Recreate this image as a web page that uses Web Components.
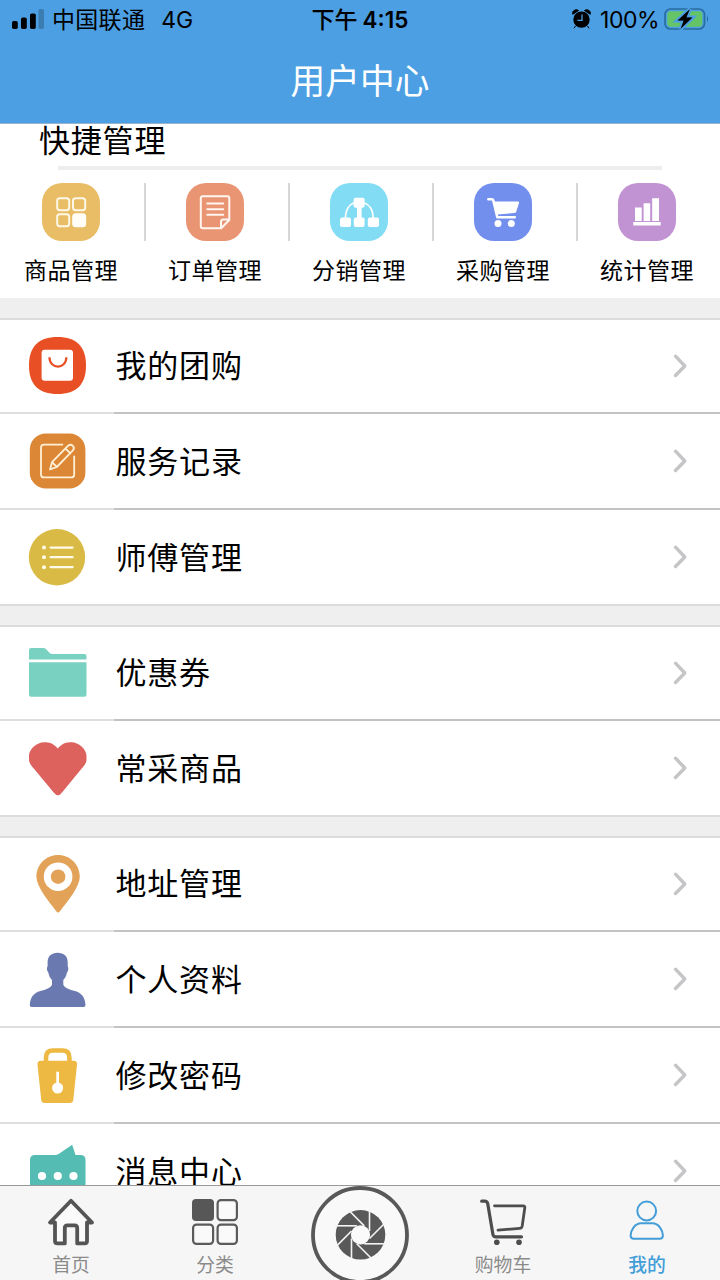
<!DOCTYPE html>
<html lang="zh-CN">
<head>
<meta charset="utf-8">
<title>用户中心</title>
<style>
  body {
    margin: 0;
    background: #efefef;
    font-family: Inter, "Noto Sans CJK SC", sans-serif;
    color: #000;
  }
</style>
</head>
<body>
<user-center></user-center>

<script>
  const icons = {
    goods: ['58 58', `<rect width="58" height="58" rx="20" fill="#e8bd65"/>
      <g fill="none" stroke="#fff8e6" stroke-width="2"><rect x="15.2" y="15.2" width="12" height="12" rx="2.6"/><rect x="31" y="15.2" width="12.2" height="12" rx="2.6"/><rect x="15.2" y="31.2" width="12" height="12" rx="2.6"/></g>
      <rect x="30.2" y="30.3" width="14" height="14" rx="3.6" fill="#fffdf6"/>`],
    order: ['58 58', `<rect width="58" height="58" rx="20" fill="#e99574"/>
      <g fill="none" stroke="#fff6ef" stroke-width="2" stroke-linejoin="round" stroke-linecap="round"><path d="M43.3 37V15.2q0-2-2-2H16.8q-2 0-2 2v28q0 2 2 2h18.4zM35 45v-6q0-2.4 2.4-2.4h5.8M21.2 20.6h16M21.2 26.2h16M21.2 31.8h16"/></g>`],
    share: ['58 58', `<rect width="58" height="58" rx="20" fill="#82dcf4"/>
      <g fill="#fff"><rect x="23.6" y="14.8" width="11" height="10" rx="2"/><rect x="10" y="34.4" width="11" height="9.6" rx="2"/><rect x="23.8" y="34.4" width="10.8" height="9.6" rx="2"/><rect x="37.8" y="34.4" width="11.2" height="9.6" rx="2"/><path d="M27 23h4.6v12H27z"/></g>
      <path d="M15.3 35Q16 23 24 19.8M34 19.8Q42.8 23 43.3 35" fill="none" stroke="#fff" stroke-width="1.7"/>`],
    buy: ['58 58', `<rect width="58" height="58" rx="20" fill="#728fee"/>
      <path d="M14.3 16.2h3.4q1.3 0 1.6 1.2l4 16.8H40.8" fill="none" stroke="#fff" stroke-width="2.5" stroke-linecap="round" stroke-linejoin="round"/>
      <path d="M20 18.6h24q1.4 0 1 1.5l-2.7 8.3q-.5 1.5-2 1.7L23 31.5z" fill="#fff"/><circle cx="24" cy="40.5" r="3.5" fill="#fff"/><circle cx="37.3" cy="40.5" r="3.5" fill="#fff"/>`],
    chart: ['58 58', `<rect width="58" height="58" rx="20" fill="#c193d3"/>
      <path d="M17 24.4h6.700v13.500H17zM25.600 20.300h6.600v17.600h-6.600zM34.200 15.300H41v22.600h-6.800zM15.300 39h27.400v3.400H15.300z" fill="#fff"/>`],
    bag: ['58 58', `<path d="M28.500 0C47.500 0 57 9.500 57 28.500S47.500 57 28.500 57 0 47.500 0 28.500 9.500 0 28.500 0z" fill="#e84f25"/>
      <rect x="12.600" y="12.800" width="31.400" height="31" rx="3" fill="#fff"/><path d="M20.400 20.300c.400 12.400 16.600 12.400 17 0" fill="none" stroke="#e84f25" stroke-width="2.200"/>`],
    edit: ['58 58', `<rect x=".8" y="1.500" width="55.600" height="55" rx="16" fill="#dc8736"/>
      <g fill="none" stroke="#fff0d5" stroke-width="1.800" stroke-linejoin="round" stroke-linecap="round"><path d="M33.400 12.600H15q-3 0-3 3v26.800q0 3 3 3h27.200q3 0 3-3V24.400"/><path d="M21 37.400l2-7.200 16.200-16.500q2.300-2 4.500 0 2.300 2.300.2 4.700L27.800 35zM36.400 16.500l5 4.800M23 30.200l4.800 4.800"/></g>`],
    list: ['58 58', `<circle cx="28" cy="29.200" r="28.200" fill="#d9ba45"/>
      <path d="M21.600 19.600h22M21.600 29.200h22M21.600 39.200h22" stroke="#fffbe8" stroke-width="2.200" stroke-linecap="round"/><g fill="#fffbe8"><circle cx="15" cy="19.600" r="2"/><circle cx="15" cy="29.200" r="2"/><circle cx="15" cy="39.200" r="2"/></g>`],
    folder: ['58 58', `<path d="M0 15.5V6q0-2 2-2h12q2 0 3.400 1.400l3 3.400Q21.600 10 23.400 10H55.500q2 0 2 2v3.500zM0 18.300h57.500v32.400q0 2-2 2H2q-2 0-2-2z" fill="#79d2c1"/>`],
    heart: ['58 58', `<path d="M28.800 9.500C34 4 37 3.300 42.500 3.300c7 0 15 7 15 13.500v4c0 3-2 5.500-5 9L33 53.500q-4 5.500-8.300 0L5 29.800c-3-3.500-5-6-5-9v-4C0 10.300 8 3.300 15 3.300c5.500 0 8.700.7 13.800 6.200z" fill="#dd625d"/>`],
    pin: ['58 58', `<path d="M29.100 0C41.200 0 50.800 9.700 50.800 21.600c0 10.400-12 24.400-20 34.800q-1.700 2-3.400 0C19.400 46 7.400 32 7.400 21.600 7.400 9.700 17 0 29.100 0z" fill="#e2a257"/><circle cx="29.100" cy="21.700" r="14.300" fill="#fff"/><circle cx="29.100" cy="21.700" r="7.300" fill="#e2a257"/>`],
    person: ['58 58', `<path d="M28.700 2.700c6.200 0 10 3.600 10 9.200v4.400c1.300 1.400.6 5-.8 6.400-.6 3.200-1.800 5.400-3.600 7.300v4.500c.9 3.400 6.500 5.200 11.600 6.500 7 1.900 10.400 7 10.600 14q0 2-1.800 2H2.600Q.8 57 .8 55c.2-7 3.600-12.100 10.600-14 5.100-1.300 10.700-3.100 11.600-6.500V30c-1.800-1.900-3-4.100-3.600-7.300-1.400-1.400-2.100-5-.8-6.400v-4.400c0-5.600 3.900-9.200 10.100-9.200z" fill="#6a7ab1"/>`],
    lock: ['58 58', `<path d="M17 17V11.500q0-7 7-7h9.400q7 0 7 7V17" fill="none" stroke="#edb942" stroke-width="4.600"/><path d="M12 14.700h32.500q4 0 3.500 4l-3.700 35q-.400 3.300-3.600 3.300H15.800q-3.200 0-3.600-3.300l-3.700-35q-.500-4 3.500-4z" fill="#edb942"/><path d="M27.300 25.700h2.700V38h-2.700z" fill="#fff"/><circle cx="28.600" cy="42" r="5.500" fill="#fff"/>`],
    message: ['58 58', `<path d="M6 13h20q2 0 4-1.200L43.200 2.700 46.500 13H51.500q5 0 5 5v40H1V18q0-5 5-5z" fill="#55bcb3"/><g fill="#fff"><circle cx="13" cy="34" r="4.100"/><circle cx="28.800" cy="34" r="4.100"/><circle cx="44.500" cy="34" r="4.100"/></g>`],
    arrow: ['14 24', `<path d="M2.500 2.200L11.800 12 2.500 21.500" fill="none" stroke="#c5c5c7" stroke-width="3.400" stroke-linecap="round" stroke-linejoin="round"/>`],
    home: ['46 46', `<path d="M23 1.800L2 23.500h5V42q0 2.400 2.600 2.400h7.200V29q0-2.600 2.600-2.600h7.200q2.600 0 2.600 2.600v15.400h7.200Q39 44.400 39 42V23.500h5z" fill="#fbfbfb" stroke="#555" stroke-width="3.800" stroke-linejoin="round"/>`],
    category: ['46 46', `<rect width="22" height="22" rx="4" fill="#575757"/><g fill="#fafafa" stroke="#5b5b5b" stroke-width="2.200"><rect x="25.600" y="1.100" width="19.300" height="20" rx="3.400"/><rect x="1.100" y="25.600" width="20" height="19.300" rx="3.400"/><rect x="25.600" y="25.600" width="19.300" height="19.300" rx="3.400"/></g>`],
    cart: ['46 46', `<g fill="none" stroke="#4d4d4d" stroke-linecap="round" stroke-linejoin="round"><path d="M1.700 2.200h3q2.400 0 3 2.400l5.200 30.600q.500 2.600 3 2.600H41.500" stroke-width="3.200"/><path d="M14.500 6.800h28.600q2 0 1.700 2l-2.600 18.200q-.400 2.200-2.600 2.400L18 31.200" stroke-width="2.800"/></g><circle cx="16.800" cy="43.300" r="2.800" fill="#4d4d4d"/><circle cx="39" cy="43.300" r="2.800" fill="#4d4d4d"/>`],
    mine: ['46 46', `<g fill="none" stroke="#439dd8" stroke-width="2"><circle cx="22.700" cy="12" r="9.400"/><path d="M17.200 24.300h11.200c6.500 0 10.500 7.200 10.500 12.300q0 3.200-3.400 3.200H10q-3.400 0-3.400-3.200c0-5.100 4.100-12.300 10.600-12.300z"/></g>`],
    signal: ['32 20', `<rect y="12" width="5.800" height="8" rx="1.800"/><rect x="9" y="8.500" width="5.800" height="11.500" rx="1.800"/><rect x="18" y="4.500" width="5.800" height="15.500" rx="1.800"/><rect x="26.500" width="5.500" height="20" rx="1.800" opacity=".22"/>`],
    alarm: ['19 20', `<circle cx="9.500" cy="10.600" r="8.200"/><path d="M.8 5.300Q0 2.500 2.400 1.200 4.600 0 6.600 1.500zM18.200 5.300q.8-2.800-1.600-4.100-2.200-1.200-4.200.3zM3.500 17l-1.500 2.300M15.500 17l1.500 2.300" stroke="#000" stroke-width="1"/><path d="M10 5.500v5.900H5.500" fill="none" stroke="#4c9fe3" stroke-width="1.300"/>`],
    battery: ['45 22', `<rect x="1" y="1" width="39.500" height="20" rx="5.500" fill="none" stroke="#296c9f" stroke-width="1.700"/><rect x="3.300" y="3.300" width="35" height="15.400" rx="3.400" fill="#65c466"/><path d="M43 7.500q2.200 3.500 0 7z" fill="#296c9f"/><path d="M26 1L13.500 12.500h6.300L16.500 21 28.500 9.500h-6.200z" fill="#000" stroke="#4c9fe3" stroke-width="4" paint-order="stroke"/><path d="M24.500 3.200L14.200 12.300h5.900L17.600 19 27.800 9.700h-5.900z"/>`]
  };

  // eight blades, parted by the same line turned by 45 degrees
  let blades = '';
  for (let i = 0; i < 8; i++) {
    blades += `<path d="M9-26V-3.700" transform="rotate(${i * 45})"/>`;
  }
  icons.shutter = ['98 98', `<circle cx="49" cy="49" r="47" fill="#f9f9f9" stroke="#585858" stroke-width="3.800"/>
    <g transform="translate(49.500 48.800)"><circle r="24.800" fill="#595959"/><circle r="9.600" fill="#fafafa"/>
    <g stroke="#f4f4f4" stroke-width="1.600">${blades}</g></g>`];

  class UiIcon extends HTMLElement {
    constructor() {
      super();
      this.attachShadow({mode: 'open'});
      const [size, shape] = icons[this.getAttribute('name')];
      const [w, h] = size.split(' ');
      this.shadowRoot.innerHTML = `
      <style>
        :host { display: block; flex: none; }
        svg { display: block; overflow: visible; }
      </style>
      <svg width="${w}" height="${h}" viewBox="0 0 ${size}">${shape}</svg>`;
    }
  }
  customElements.define('ui-icon', UiIcon);

  class StatusBar extends HTMLElement {
    constructor() {
      super();
      this.attachShadow({mode: 'open'});
      this.shadowRoot.innerHTML = `
      <style>
        :host {
          display: grid;
          grid-template-columns: 1fr auto 1fr;
          height: 40px;
          padding: 0 11px 0 12px;
          font-size: 23px;
          line-height: 40px;
          white-space: nowrap;
        }
        div { display: flex; align-items: center; }
        ui-icon { margin-bottom: 3px; }
        .right { justify-content: flex-end; }
        .carrier { margin: 0 16px 0 8px; letter-spacing: .3px; }
        .time { font-weight: 600; font-size: 22.500px; margin-right: 1px; }
        .time span { font-weight: 500; margin-right: 5px; font-size: 23px; }
        .percent { margin: 0 5px 0 9px; letter-spacing: -.5px; font-size: 23px; }
      </style>
      <div><ui-icon name="signal"></ui-icon><span class="carrier">中国联通</span><span>4G</span></div>
      <div class="time"><span>下午</span>4:15</div>
      <div class="right"><ui-icon name="alarm"></ui-icon><span class="percent">100%</span><ui-icon name="battery"></ui-icon></div>`;
    }
  }
  customElements.define('status-bar', StatusBar);

  class QuickItem extends HTMLElement {
    constructor() {
      super();
      this.attachShadow({mode: 'open'});
      this.shadowRoot.innerHTML = `
      <style>
        :host { display: block; width: 144px; }
        .icon {
          display: flex;
          justify-content: center;
          border-left: 2px solid #d6d6d6;
          padding-right: 4px;
        }
        :host(:first-child) .icon { border-color: transparent; }
        p {
          margin: 15px 2px 0 0;
          font-size: 23px;
          line-height: 30px;
          letter-spacing: .5px;
          text-align: center;
        }
      </style>
      <div class="icon"><ui-icon name="${this.getAttribute('icon')}"></ui-icon></div>
      <p><slot></slot></p>`;
    }
  }
  customElements.define('quick-item', QuickItem);

  class MenuRow extends HTMLElement {
    constructor() {
      super();
      this.attachShadow({mode: 'open'});
      this.shadowRoot.innerHTML = `
      <style>
        :host {
          display: flex;
          align-items: center;
          box-sizing: border-box;
          height: 96px;
          padding: 0 33px 0 29px;
          border-bottom: 2px solid;
          border-image: linear-gradient(90deg, #dfdfdf 115px, #c3c3c3 115px) 2;
        }
        :host(:first-child) { height: 94px; }
        :host(:last-child) { border-image: none; border-color: #dcdcdc; }
        .text {
          flex: 1;
          margin: 2px 0 0 28.500px;
          font-size: 31px;
          letter-spacing: .8px;
          line-height: 44px;
        }
        :host(:first-child) .text { margin-top: 0; }
      </style>
      <ui-icon name="${this.getAttribute('icon')}"></ui-icon>
      <span class="text"><slot></slot></span>
      <ui-icon name="arrow"></ui-icon>`;
    }
  }
  customElements.define('menu-row', MenuRow);

  class MenuGroup extends HTMLElement {
    constructor() {
      super();
      this.attachShadow({mode: 'open'});
      this.shadowRoot.innerHTML = `
      <style>
        :host { display: block; background: #fff; border-top: 2px solid #dcdcdc; }
      </style>
      <slot></slot>`;
    }
  }
  customElements.define('menu-group', MenuGroup);

  class TabItem extends HTMLElement {
    constructor() {
      super();
      this.attachShadow({mode: 'open'});
      this.shadowRoot.innerHTML = `
      <style>
        :host {
          display: flex;
          flex-direction: column;
          align-items: center;
          box-sizing: border-box;
          width: 144px;
          padding: 13px 2px 0 0;
          font-size: 18.800px;
          line-height: 26px;
          color: #8b8b8b;
        }
        :host([active]) { color: #439dd8; font-weight: 500; }
        :host([big]) { padding: 0; }
        span { margin-top: 8px; }
      </style>
      <ui-icon name="${this.getAttribute('icon')}"></ui-icon>
      <span><slot></slot></span>`;
    }
  }
  customElements.define('tab-item', TabItem);

  class UserCenter extends HTMLElement {
    constructor() {
      super();
      this.attachShadow({mode: 'open'});
      this.shadowRoot.innerHTML = `
      <style>
        :host {
          display: flex;
          flex-direction: column;
          width: 720px;
          height: 1280px;
          overflow: hidden;
        }
        header {
          flex: none;
          height: 123px;
          background: #4c9fe3;
          border-bottom: 1px solid #9db4c8;
        }
        h1 {
          margin: 0;
          font-size: 34.700px;
          font-weight: 400;
          line-height: 82px;
          text-align: center;
          color: #fff;
        }
        main {
          flex: 1;
          min-height: 0;
          overflow: hidden;
          display: flex;
          flex-direction: column;
          gap: 19px;
        }
        section { height: 174px; background: #fff; margin-bottom: 1px; flex: none; }
        menu-group { flex: none; }
        h2 {
          margin: 0;
          padding-left: 39px;
          font-size: 31px;
          font-weight: 400;
          line-height: 33px;
          letter-spacing: .8px;
        }
        .line { height: 4px; margin: 9px 58px 13px; background: #eee; }
        .quick { display: flex; }
        footer {
          flex: none;
          display: flex;
          height: 94px;
          background: #f6f6f6;
          border-top: 1px solid #999;
        }
      </style>
      <header>
        <status-bar></status-bar>
        <h1>用户中心</h1>
      </header>
      <main>
        <section>
          <h2>快捷管理</h2>
          <div class="line"></div>
          <div class="quick">
            <quick-item icon="goods">商品管理</quick-item>
            <quick-item icon="order">订单管理</quick-item>
            <quick-item icon="share">分销管理</quick-item>
            <quick-item icon="buy">采购管理</quick-item>
            <quick-item icon="chart">统计管理</quick-item>
          </div>
        </section>
        <menu-group>
          <menu-row icon="bag">我的团购</menu-row>
          <menu-row icon="edit">服务记录</menu-row>
          <menu-row icon="list">师傅管理</menu-row>
        </menu-group>
        <menu-group>
          <menu-row icon="folder">优惠券</menu-row>
          <menu-row icon="heart">常采商品</menu-row>
        </menu-group>
        <menu-group>
          <menu-row icon="pin">地址管理</menu-row>
          <menu-row icon="person">个人资料</menu-row>
          <menu-row icon="lock">修改密码</menu-row>
          <menu-row icon="message">消息中心</menu-row>
        </menu-group>
      </main>
      <footer>
        <tab-item icon="home">首页</tab-item>
        <tab-item icon="category">分类</tab-item>
        <tab-item icon="shutter" big></tab-item>
        <tab-item icon="cart">购物车</tab-item>
        <tab-item icon="mine" active>我的</tab-item>
      </footer>`;
    }
  }
  customElements.define('user-center', UserCenter);
</script>
</body>
</html>
